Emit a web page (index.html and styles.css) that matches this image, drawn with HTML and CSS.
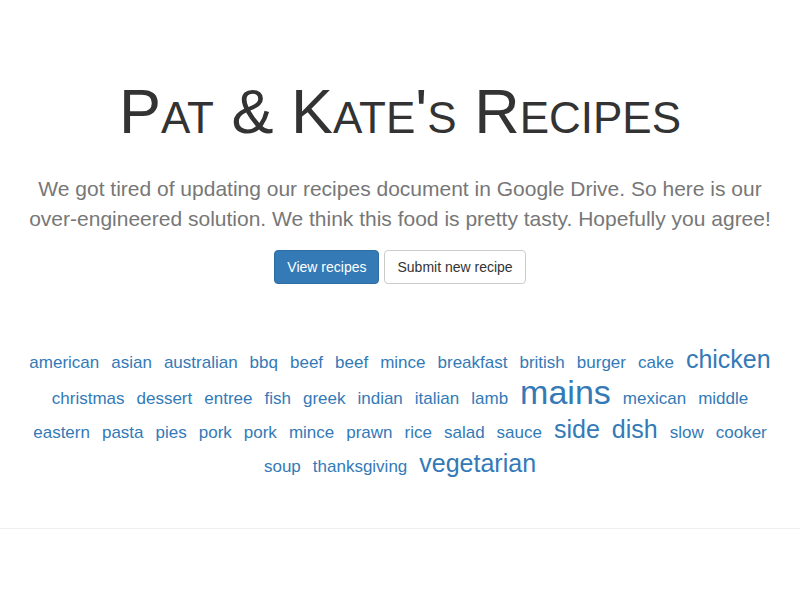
FILE: index.html
```html
<!DOCTYPE html>
<html lang="en">
<head>
<meta charset="utf-8">
<title>Pat &amp; Kate's Recipes</title>
<link rel="stylesheet" href="styles.css">
</head>
<body>
<header class="hero">
  <div class="container">
    <h1 class="title">Pat &amp; Kate's Recipes</h1>
    <p class="lead">We got tired of updating our recipes document in Google Drive. So here is our over-engineered solution. We think this food is pretty tasty. Hopefully you agree!</p>
    <div class="actions">
      <a class="btn btn-primary" href="#">View recipes</a>
      <a class="btn btn-default" href="#">Submit new recipe</a>
    </div>
  </div>
</header>
<main class="container">
  <div class="tags">
    <a class="tag" href="#">american</a>
    <a class="tag" href="#">asian</a>
    <a class="tag" href="#">australian</a>
    <a class="tag" href="#">bbq</a>
    <a class="tag" href="#">beef</a>
    <a class="tag" href="#">beef</a>
    <a class="tag" href="#">mince</a>
    <a class="tag" href="#">breakfast</a>
    <a class="tag" href="#">british</a>
    <a class="tag" href="#">burger</a>
    <a class="tag" href="#">cake</a>
    <a class="tag tag-big" href="#">chicken</a>
    <a class="tag" href="#">christmas</a>
    <a class="tag" href="#">dessert</a>
    <a class="tag" href="#">entree</a>
    <a class="tag" href="#">fish</a>
    <a class="tag" href="#">greek</a>
    <a class="tag" href="#">indian</a>
    <a class="tag" href="#">italian</a>
    <a class="tag" href="#">lamb</a>
    <a class="tag tag-huge" href="#">mains</a>
    <a class="tag" href="#">mexican</a>
    <a class="tag" href="#">middle</a>
    <a class="tag" href="#">eastern</a>
    <a class="tag" href="#">pasta</a>
    <a class="tag" href="#">pies</a>
    <a class="tag" href="#">pork</a>
    <a class="tag" href="#">pork</a>
    <a class="tag" href="#">mince</a>
    <a class="tag" href="#">prawn</a>
    <a class="tag" href="#">rice</a>
    <a class="tag" href="#">salad</a>
    <a class="tag" href="#">sauce</a>
    <a class="tag tag-big" href="#">side</a>
    <a class="tag tag-big" href="#">dish</a>
    <a class="tag" href="#">slow</a>
    <a class="tag" href="#">cooker</a>
    <a class="tag" href="#">soup</a>
    <a class="tag" href="#">thanksgiving</a>
    <a class="tag tag-big" href="#">vegetarian</a>
  </div>
</main>
<hr class="divider">
</body>
</html>
```

FILE: styles.css
```css
html, body {
  margin: 0;
  padding: 0;
  background: #fff;
}

body {
  font-family: "Liberation Sans", Arial, sans-serif;
  font-size: 14px;
  line-height: 1.42857;
  color: #333;
}

.container {
  width: 750px;
  margin: 0 auto;
}

.hero {
  padding-top: 77px;
  text-align: center;
}

.title {
  margin: 0;
  font-size: 63px;
  line-height: 1.1;
  font-weight: 500;
  font-variant: small-caps;
  color: #333;
}

.lead {
  margin: 28px 0 16px;
  font-size: 21px;
  line-height: 30px;
  font-weight: 300;
  color: #777;
}

.actions {
  display: flex;
  justify-content: center;
  gap: 5px;
}

.btn {
  display: inline-block;
  padding: 6px 12px;
  font-size: 14px;
  line-height: 20px;
  border: 1px solid transparent;
  border-radius: 4px;
  text-decoration: none;
}

.btn-primary {
  color: #fff;
  background: #337ab7;
  border-color: #2e6da4;
}

.btn-default {
  color: #333;
  background: #fff;
  border-color: #ccc;
}

.tags {
  display: flex;
  flex-wrap: wrap;
  justify-content: center;
  align-items: baseline;
  column-gap: 12px;
  padding-top: 62px;
}

.tag {
  font-size: 17px;
  line-height: 34px;
  color: #337ab7;
  text-decoration: none;
}

.tag-big {
  font-size: 25px;
  line-height: 25px;
}

.tag-huge {
  font-size: 34px;
  line-height: 24px;
}

.divider {
  margin: 44px 0 0;
  border: 0;
  border-top: 1px solid #eee;
  height: 0;
}
```
